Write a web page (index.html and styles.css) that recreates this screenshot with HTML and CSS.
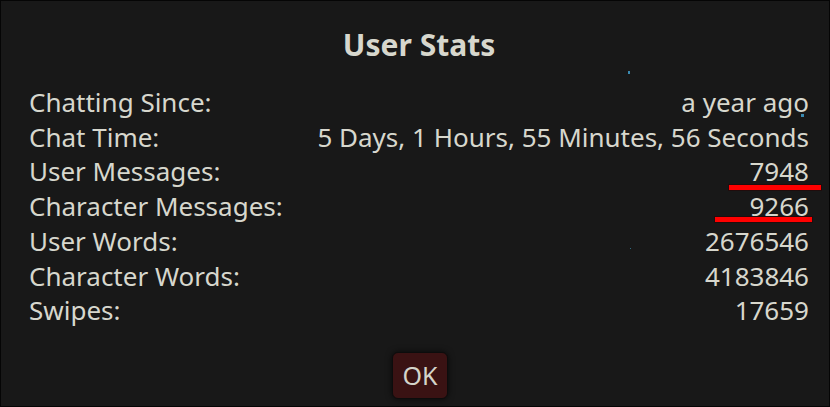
FILE: index.html
```html
<!DOCTYPE html>
<html lang="en">
<head>
<meta charset="utf-8">
<title>User Stats</title>
<link rel="stylesheet" href="styles.css">
</head>
<body>
<div class="window">
  <h2 class="title">User Stats</h2>
  <div class="stats">
    <div class="label">Chatting Since:</div><div class="value">a year ago</div>
    <div class="label">Chat Time:</div><div class="value">5 Days, 1 Hours, 55 Minutes, 56 Seconds</div>
    <div class="label">User Messages:</div><div class="value">7948</div>
    <div class="label">Character Messages:</div><div class="value">9266</div>
    <div class="label">User Words:</div><div class="value">2676546</div>
    <div class="label">Character Words:</div><div class="value">4183846</div>
    <div class="label">Swipes:</div><div class="value">17659</div>
  </div>
  <div class="actions"><button class="ok">OK</button></div>
  <div class="mark mark-1"></div>
  <div class="mark mark-2"></div>
  <div class="dot dot-1"></div>
  <div class="dot dot-2"></div>
  <div class="dot dot-3"></div>
</div>
</body>
</html>
```
FILE: styles.css
```css
html, body {
  margin: 0;
  padding: 0;
  background: #181818;
}
.window {
  position: relative;
  width: 830px;
  height: 407px;
  box-sizing: border-box;
  border: 1px solid #050505;
  background: #181818;
  color: #d7d7cd;
  font-family: "Noto Sans", "Open Sans", sans-serif;
  display: flex;
  flex-direction: column;
  padding: 27px 20px 0 28px;
}
.title {
  margin: 0;
  font-size: 30px;
  font-weight: 700;
  line-height: 34px;
  text-align: center;
}
.stats {
  margin-top: 23px;
  display: grid;
  grid-template-columns: auto auto;
  justify-content: space-between;
  font-size: 26px;
  line-height: 34.7px;
}
.value {
  text-align: right;
}
.actions {
  margin-top: 24px;
  display: flex;
  justify-content: center;
  padding-left: 2px;
}
.ok {
  width: 56px;
  height: 47px;
  box-sizing: border-box;
  border: 1px solid #0c0c0c;
  border-radius: 6px;
  background: #3a1213;
  color: #d4d4ca;
  font-family: "Noto Sans", sans-serif;
  font-size: 25px;
  padding: 0;
  box-shadow: 0 0 6px rgba(0, 0, 0, 0.7);
}
.mark {
  position: absolute;
  height: 5px;
  background: #ff0000;
  box-shadow: 0 0 0 1px rgba(40, 0, 0, 0.5);
}
.mark-1 {
  left: 728px;
  top: 184px;
  width: 92px;
}
.mark-2 {
  left: 714px;
  top: 216px;
  width: 97px;
}
.dot {
  position: absolute;
  width: 2px;
  height: 3px;
  background: #3a8ab0;
}
.dot-1 { left: 627px; top: 70px; }
.dot-2 { left: 800px; top: 113px; width: 3px; }
.dot-3 { left: 629px; top: 247px; width: 1px; height: 1px; background: #2f6a80; }
```
